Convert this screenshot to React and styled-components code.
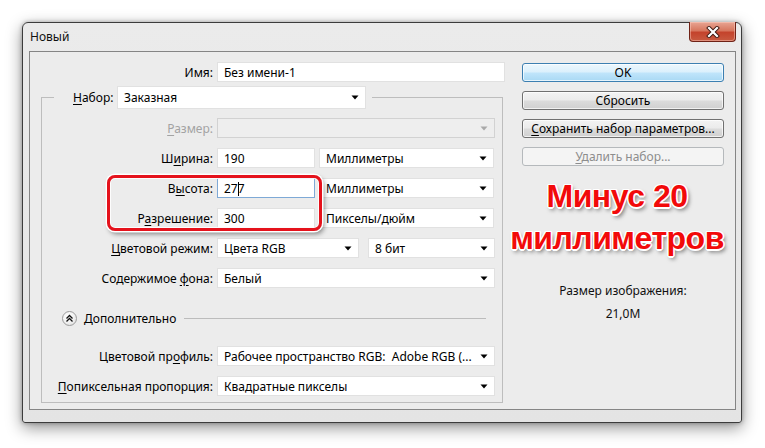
import React from 'react';
import styled, { createGlobalStyle } from 'styled-components';

const Global = createGlobalStyle`
  html, body { margin: 0; padding: 0; background: #ffffff; }
  body {
    width: 765px; height: 448px; overflow: hidden;
    font-family: "Noto Sans", "Open Sans", sans-serif;
    font-size: 12px; color: #000;
  }
  * { box-sizing: border-box; }
`;

const Page = styled.div`
  padding: 22px 0 0 22px;
`;

const Window = styled.div`
  width: 720px;
  height: 401px;
  border: 1px solid #3c3c3c;
  border-radius: 6px 6px 3px 3px;
  background: linear-gradient(180deg, #ebebeb 0%, #e4e4e4 100%);
  box-shadow: 0 5px 16px rgba(0, 0, 0, 0.42), 0 0 4px rgba(0, 0, 0, 0.3);
  padding: 0 5px 12px 6px;
  display: flex;
  flex-direction: column;
`;

const TitleBar = styled.div`
  height: 28px;
  display: flex;
  align-items: flex-start;
  justify-content: space-between;
  padding-left: 1px;
`;

const Title = styled.div`
  line-height: 28px;
  font-size: 12px;
  color: #111;
`;

const CloseBtn = styled.div`
  width: 47px;
  height: 20px;
  margin-top: -1px;
  border: 1px solid #6f2216;
  border-top: none;
  border-radius: 0 0 4px 4px;
  background: linear-gradient(180deg, #e8a593 0%, #d7775f 45%, #c4432c 55%, #c85a40 100%);
  box-shadow: inset 0 0 0 1px rgba(255, 210, 200, 0.45);
  display: flex;
  align-items: center;
  justify-content: center;
`;

const Client = styled.div`
  flex: 1;
  border: 1px solid #858585;
  background: #ececec;
  display: flex;
  padding: 10px 11px 0 11px;
  gap: 17px;
`;

const LeftPane = styled.div`
  width: 464px;
  display: flex;
  flex-direction: column;
`;

const RightPane = styled.div`
  width: 202px;
  display: flex;
  flex-direction: column;
  padding-top: 1px;
`;

const Row = styled.div`
  display: flex;
  align-items: center;
  height: 20px;
  gap: ${(p) => p.$gap ?? 4}px;
`;

const Label = styled.div`
  width: ${(p) => p.$w ?? 171}px;
  text-align: right;
  white-space: nowrap;
  color: ${(p) => (p.$disabled ? '#a3a3a3' : '#000')};
  flex: none;
`;

const Key = styled.span`
  text-decoration: underline;
  text-underline-offset: 2px;
`;

const Field = styled.div`
  position: relative;
  width: ${(p) => p.$w}px;
  height: ${(p) => p.$h ?? 20}px;
  flex: none;
  margin-left: ${(p) => p.$ml ?? 0}px;
  background: ${(p) => (p.$disabled ? '#eeeeee' : '#ffffff')};
  border: 1px solid ${(p) => (p.$focus ? '#7ea9d6' : p.$disabled ? '#d2d2d2' : '#e1e1e1')};
  display: flex;
  align-items: center;
  justify-content: space-between;
  padding: 0 6px 0 6px;
  white-space: nowrap;
  overflow: hidden;
  color: #000;
`;

const Caret = styled.span`
  display: inline-block;
  width: 1px;
  height: 14px;
  background: #000;
  vertical-align: middle;
  margin: 0 -1px 0 0;
`;

const ArrowSvg = ({ disabled }) => (
  <svg width="8" height="5" viewBox="0 0 8 5" style={{ flex: 'none' }}>
    <polygon points="0.5,0.5 7.5,0.5 4,4.5" fill={disabled ? '#a9a9a9' : '#000'} />
  </svg>
);

const Select = ({ w, h, ml, disabled, children }) => (
  <Field $w={w} $h={h} $ml={ml} $disabled={disabled}>
    <span>{children}</span>
    <ArrowSvg disabled={disabled} />
  </Field>
);

const Group = styled.fieldset`
  margin: 4px 0 0 0;
  padding: 9px 0 6px 0;
  border: 1px solid #bdbdbd;
  width: 462px;
  min-width: 0;
`;

const Legend = styled.legend`
  margin-left: 12px;
  padding: 0 6px 0 19px;
  display: flex;
  align-items: center;
  gap: 4px;
  height: 23px;
`;

const Rows = styled.div`
  position: relative;
  display: flex;
  flex-direction: column;
  gap: 10px;
`;

const Highlight = styled.div`
  position: absolute;
  left: 65px;
  top: 57px;
  width: 215px;
  height: 56px;
  border: 3px solid #e5121c;
  border-radius: 8px;
  box-shadow: 0 0 0 1.5px #ffffff, 2px 3px 5px rgba(0, 0, 0, 0.45), inset 0 0 0 1px rgba(255, 255, 255, 0.9);
  pointer-events: none;
`;

const ExpanderRow = styled.div`
  display: flex;
  align-items: center;
  height: 16px;
  margin: 12px 0 10px 0;
  padding: 0 16px 0 20px;
  gap: 7px;
`;

const Expander = styled.div`
  width: 15px;
  height: 15px;
  border-radius: 50%;
  border: 1px solid #9c9c9c;
  background: radial-gradient(circle at 40% 35%, #ffffff 0%, #f2f2f2 50%, #d8d8d8 100%);
  display: flex;
  align-items: center;
  justify-content: center;
  flex: none;
`;

const Rule = styled.div`
  flex: 1;
  height: 1px;
  background: #bcbcbc;
  margin-left: 1px;
`;

const Button = styled.div`
  height: 19px;
  margin-bottom: 9px;
  border-radius: 3px;
  display: flex;
  align-items: center;
  justify-content: center;
  white-space: nowrap;
  border: 1px solid ${(p) => (p.$primary ? '#3c7fb1' : p.$disabled ? '#b5b9bc' : '#707070')};
  color: ${(p) => (p.$disabled ? '#8d8d8d' : '#000')};
  background: ${(p) =>
    p.$primary
      ? 'linear-gradient(180deg, #ecf7fd 0%, #dbf0fc 48%, #c0e5fb 52%, #a9d9f4 100%)'
      : p.$disabled
      ? '#f4f4f4'
      : 'linear-gradient(180deg, #f3f3f3 0%, #ebebeb 48%, #dcdcdc 52%, #d0d0d0 100%)'};
  box-shadow: inset 0 0 0 1px ${(p) => (p.$disabled ? 'transparent' : 'rgba(255,255,255,0.7)')};
`;

const Callout = styled.div`
  margin: 0 -20px;
  padding-right: 12px;
  text-align: center;
  font-family: "Liberation Sans", Arial, sans-serif;
  font-weight: bold;
  font-size: 32px;
  letter-spacing: -0.5px;
  line-height: 42px;
  white-space: nowrap;
  color: #f20a0a;
  text-shadow:
    -1px -1px 0 #fff, 1px -1px 0 #fff, -1px 1px 0 #fff, 1px 1px 0 #fff,
    0 -1.5px 0 #fff, 0 1.5px 0 #fff, -1.5px 0 0 #fff, 1.5px 0 0 #fff,
    2px 3px 4px rgba(0, 0, 0, 0.55);
`;

const Info = styled.div`
  margin-top: 24px;
  text-align: center;
  line-height: 16px;
  color: #111;
`;

const InfoValue = styled.div`
  margin-top: 7px;
`;

export default function App() {
  return (
    <>
      <Global />
      <Page>
        <Window>
          <TitleBar>
            <Title>Новый</Title>
            <CloseBtn>
              <svg width="14" height="12" viewBox="0 0 14 12">
                <path d="M3 2 L11 10 M11 2 L3 10" stroke="#3b1710" strokeWidth="4" strokeLinecap="square" />
                <path d="M3 2 L11 10 M11 2 L3 10" stroke="#ffffff" strokeWidth="2.2" strokeLinecap="square" />
              </svg>
            </CloseBtn>
          </TitleBar>
          <Client>
            <LeftPane>
              <Row>
                <Label $w={172}>Имя:</Label>
                <Field $w={288}>Без имени-1</Field>
              </Row>
              <Group>
                <Legend>
                  <Label $w={40}>
                    <Key>Н</Key>абор:
                  </Label>
                  <Select w={249} h={23}>Заказная</Select>
                </Legend>
                <Rows>
                  <Row>
                    <Label $disabled>
                      <Key>Р</Key>азмер:
                    </Label>
                    <Select w={278} disabled>
                      {' '}
                    </Select>
                  </Row>
                  <Row>
                    <Label>
                      Ш<Key>и</Key>рина:
                    </Label>
                    <Field $w={98}>190</Field>
                    <Select w={175}>Миллиметры</Select>
                  </Row>
                  <Row>
                    <Label>
                      В<Key>ы</Key>сота:
                    </Label>
                    <Field $w={98} $focus>
                      <span>
                        27
                        <Caret />7
                      </span>
                    </Field>
                    <Select w={175}>Миллиметры</Select>
                  </Row>
                  <Row>
                    <Label>
                      Р<Key>а</Key>зрешение:
                    </Label>
                    <Field $w={98}>300</Field>
                    <Select w={175}>Пикселы/дюйм</Select>
                  </Row>
                  <Row>
                    <Label>
                      <Key>Ц</Key>ветовой режим:
                    </Label>
                    <Select w={142}>Цвета RGB</Select>
                    <Select w={127} ml={5}>8 бит</Select>
                  </Row>
                  <Row>
                    <Label>
                      Содержимое <Key>ф</Key>она:
                    </Label>
                    <Select w={278}>Белый</Select>
                  </Row>
                  <ExpanderRow>
                    <Expander>
                      <svg width="9" height="9" viewBox="0 0 9 9">
                        <path d="M1.5 4.5 L4.5 1.5 L7.5 4.5 M1.5 7.5 L4.5 4.5 L7.5 7.5" fill="none" stroke="#111" strokeWidth="1.3" />
                      </svg>
                    </Expander>
                    <span>Дополнительно</span>
                    <Rule />
                  </ExpanderRow>
                  <Row>
                    <Label>
                      Цветовой пр<Key>о</Key>филь:
                    </Label>
                    <Select w={278}>Рабочее пространство RGB:&nbsp; Adobe RGB (...</Select>
                  </Row>
                  <Row>
                    <Label>
                      <Key>П</Key>опиксельная пропорция:
                    </Label>
                    <Select w={278}>Квадратные пикселы</Select>
                  </Row>
                  <Highlight />
                </Rows>
              </Group>
            </LeftPane>
            <RightPane>
              <Button $primary>OK</Button>
              <Button>Сбросить</Button>
              <Button>
                <span>
                  <Key>С</Key>охранить набор параметров...
                </span>
              </Button>
              <Button $disabled>
                <span>
                  <Key>У</Key>далить набор...
                </span>
              </Button>
              <Callout>
                Минус 20
                <br />
                миллиметров
              </Callout>
              <Info>
                <div>Размер изображения:</div>
                <InfoValue>21,0M</InfoValue>
              </Info>
            </RightPane>
          </Client>
        </Window>
      </Page>
    </>
  );
}
